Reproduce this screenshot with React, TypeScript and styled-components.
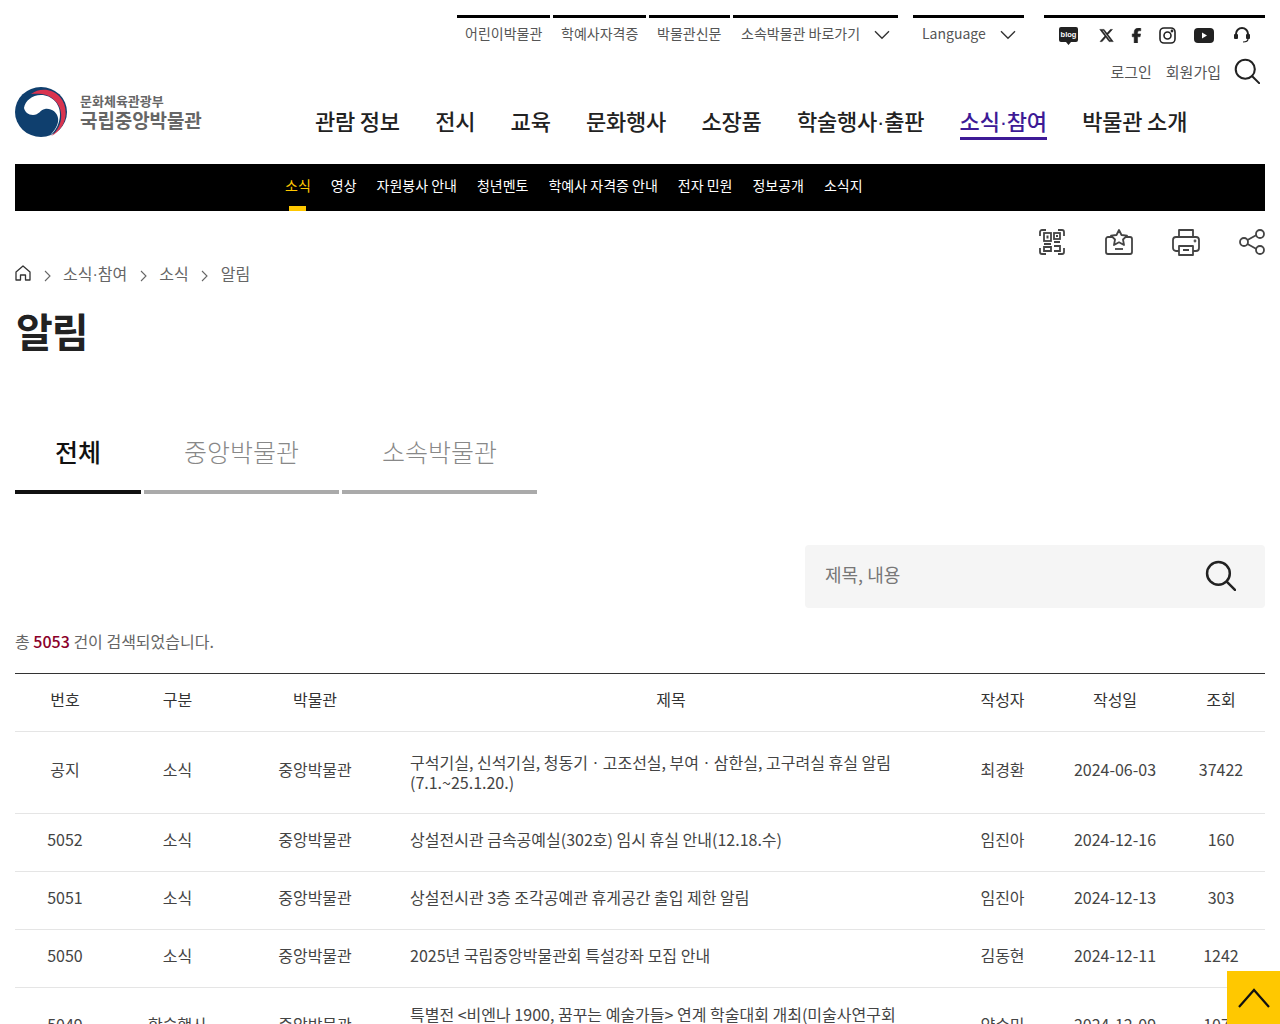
import React from 'react'
import styled, { createGlobalStyle } from 'styled-components'
import { FaFacebookF, FaXTwitter } from 'react-icons/fa6'

const GlobalStyle = createGlobalStyle`
    html, body {
        margin: 0;
        padding: 0;
        background: #fff;
        color: #333;
        font-family: "Noto Sans CJK KR", "Noto Sans", sans-serif;
    }
    * {
        box-sizing: border-box;
    }
`

const Page = styled.div`
    height: 100vh;
    overflow: hidden;
    padding: 15px 15px 0;
    position: relative;
`

const UtilRow = styled.div`
    display: flex;
    height: 40px;
    justify-content: flex-end;
`

const UtilGroup = styled.div`
    display: flex;
    gap: 3px;
`

const UtilItem = styled.a<{ $w: number; $ml?: number; $pl?: number }>`
    align-items: center;
    border-top: 3px solid #000;
    color: #555;
    display: flex;
    font-size: 14px;
    height: 40px;
    justify-content: space-between;
    margin-left: ${({ $ml }) => $ml || 0}px;
    padding: 0 8px 7px ${({ $pl }) => $pl || 8}px;
    white-space: nowrap;
    width: ${({ $w }) => $w}px;
    svg {
        margin-top: 4px;
    }
`

const SocialBar = styled.div`
    align-items: center;
    border-top: 3px solid #000;
    display: flex;
    height: 40px;
    margin-left: 20px;
    padding-bottom: 2px;
    position: relative;
    width: 221px;
    svg {
        color: #222;
        position: absolute;
    }
`

const LoginRow = styled.div`
    align-items: center;
    display: flex;
    height: 32px;
    justify-content: flex-end;
    padding-right: 5px;
    a {
        color: #555;
        font-size: 15px;
        margin-right: 14px;
    }
    a:last-of-type {
        margin-right: 13px;
    }
`

const NavRow = styled.div`
    display: flex;
    height: 77px;
`

const Logo = styled.a`
    align-items: flex-start;
    display: flex;
    gap: 13px;
    width: 300px;
`

const LogoText = styled.div`
    color: #666;
    display: flex;
    flex-direction: column;
    padding-top: 5px;
    small {
        font-size: 13px;
        font-weight: 700;
        letter-spacing: 0;
        line-height: 17px;
    }
    strong {
        font-size: 19px;
        font-weight: 700;
        letter-spacing: -0.1px;
        line-height: 22px;
    }
`

const MainNav = styled.nav`
    display: flex;
    gap: 35.3px;
    height: 53px;
`

const MainLink = styled.a<{ $active?: boolean }>`
    border-bottom: 3px solid ${({ $active }) => ($active ? '#3d1a96' : 'transparent')};
    color: ${({ $active }) => ($active ? '#3d1a96' : '#222')};
    font-size: 22px;
    font-weight: 500;
    height: 53px;
    letter-spacing: -0.2px;
    line-height: 30px;
    padding-top: 18px;
    white-space: nowrap;
`

// the middle dot is narrower than the CJK face's own
const Dot = styled.span`
    font-family: "Liberation Sans", sans-serif;
`

const SubNav = styled.nav`
    align-items: center;
    background: #000;
    display: flex;
    gap: 20px;
    height: 47px;
    padding-left: 270px;
`

const SubLink = styled.a<{ $active?: boolean }>`
    color: ${({ $active }) => ($active ? '#ffc800' : '#fff')};
    font-size: 14px;
    height: 47px;
    line-height: 43px;
    position: relative;
    white-space: nowrap;
    ${({ $active }) => $active && `
        &:after {
            background: #ffc800;
            bottom: 0;
            content: '';
            height: 5px;
            left: 4px;
            position: absolute;
            width: 17px;
        }
    `}
`

const ActionRow = styled.div`
    display: flex;
    gap: 39px;
    height: 34px;
    justify-content: flex-end;
    padding-top: 17px;
    svg {
        flex: none;
    }
`

const Breadcrumb = styled.div`
    align-items: center;
    color: #666;
    display: flex;
    font-size: 16px;
    gap: 12.5px;
    height: 26px;
    margin-top: 15px;
    svg {
        flex: none;
    }
`

const PageTitle = styled.h1`
    color: #222;
    font-size: 40px;
    font-weight: 700;
    letter-spacing: -1px;
    line-height: 58px;
    margin: 15px 0 0 1px;
`

const Tabs = styled.div`
    display: flex;
    gap: 3px;
    margin-top: 64px;
`

const Tab = styled.a<{ $w: number; $active?: boolean }>`
    border-bottom: 4px solid ${({ $active }) => ($active ? '#111' : '#aaa')};
    color: ${({ $active }) => ($active ? '#111' : '#888')};
    font-size: 25px;
    font-weight: ${({ $active }) => ($active ? 500 : 300)};
    height: 71px;
    line-height: 50px;
    padding-top: 3px;
    text-align: center;
    width: ${({ $w }) => $w}px;
`

const SearchRow = styled.div`
    display: flex;
    justify-content: flex-end;
    margin-top: 51px;
`

const SearchBox = styled.div`
    align-items: center;
    background: #f5f5f5;
    border-radius: 4px;
    display: flex;
    height: 63px;
    justify-content: space-between;
    padding: 0 29px 0 18px;
    width: 460px;
    input {
        background: transparent;
        border: 0;
        color: #333;
        flex: 1;
        font-family: inherit;
        font-size: 18px;
        margin-bottom: 6px;
        outline: 0;
    }
    input::placeholder {
        color: #777;
        opacity: 1;
    }
    svg {
        margin-bottom: 3px;
    }
`

const Total = styled.p`
    color: #666;
    font-size: 16px;
    line-height: 24px;
    margin: 21px 0 0;
    b {
        color: #8b0029;
        font-weight: 500;
    }
`

const Table = styled.table`
    border-collapse: collapse;
    border-top: 1px solid #333;
    color: #444;
    font-size: 16px;
    margin-top: 20px;
    table-layout: fixed;
    width: 1250px;
    th, td {
        border-bottom: 1px solid #e5e5e5;
        font-weight: 400;
        line-height: 20px;
        padding: 0 0 8px;
        text-align: center;
    }
    th {
        color: #333;
        height: 58px;
        padding-bottom: 7px;
    }
`

const Row = styled.tr<{ $h: number }>`
    height: ${({ $h }) => $h}px;
`

const TitleCell = styled.td<{ $lift: number }>`
    && {
        padding: 0 40px ${({ $lift }) => $lift}px 20px;
        text-align: left;
        word-break: keep-all;
    }
`

const TopButton = styled.a`
    align-items: center;
    background: #ffc800;
    bottom: 0;
    display: flex;
    height: 53px;
    justify-content: center;
    position: fixed;
    right: 0;
    width: 53px;
`

const Chevron = ({ w = 16 }: { w?: number }) => (
    <svg width={w} height={w * 0.6} viewBox="0 0 16 9" fill="none" stroke="#333" strokeWidth="1.4">
        <path d="M1 1l7 7 7-7" />
    </svg>
)

const SearchIcon = ({ size }: { size: number }) => (
    <svg width={size} height={size} viewBox="0 0 30 30" fill="none" stroke="#222" strokeWidth="2.4">
        <circle cx="13" cy="13" r="11" />
        <path d="M21 21l8 8" strokeLinecap="round" />
    </svg>
)

const Crumb = () => (
    <svg width="7" height="12" viewBox="0 0 7 12" fill="none" stroke="#666" strokeWidth="1.1" style={{ marginTop: 5 }}>
        <path d="M1 1l5 5-5 5" />
    </svg>
)

const Taegeuk = () => (
    <svg width="52" height="50" viewBox="0 0 52 50">
        <ellipse cx="26" cy="25" rx="26" ry="25" fill="#0f3f6e" />
        <path d="M9 21C10 14 17 8 26 8c11 0 19 9 19 19 0 9-4 17-10 21.500C41 42 44 36 43 31c-1-6-7-10-13-9-5 1-6 6-12 6-5 0-8-3-9-7z" fill="#fff" />
        <path d="M16 7C24 1 37 1 45 10c8 9 8 26-3 35-2 2-4 3-6 4 8-6 11-15 10-23C45 16 36 8 27 7c-4-.500-8-.500-11 0z" fill="#d9344f" />
    </svg>
)

const Social = () => (
    <SocialBar>
        <svg style={{ left: 14 }} width="21" height="20" viewBox="0 0 21 20">
            <path d="M3 1h15a2 2 0 0 1 2 2v11a2 2 0 0 1-2 2h-5l-2.500 3-2.500-3H3a2 2 0 0 1-2-2V3a2 2 0 0 1 2-2z" fill="#222" />
            <text x="10.500" y="11" fontSize="7.500" fontWeight="700" fill="#fff" textAnchor="middle" fontFamily="Liberation Sans, sans-serif">blog</text>
        </svg>
        <FaXTwitter style={{ left: 55, stroke: '#222', strokeWidth: 18 }} size={15} />
        <FaFacebookF style={{ left: 85, stroke: '#222', strokeWidth: 18 }} size={15} />
        <svg style={{ left: 115 }} width="17" height="17" viewBox="0 0 17 17" fill="none" stroke="#222" strokeWidth="1.600">
            <rect x="1" y="1" width="15" height="15" rx="4" />
            <circle cx="8.500" cy="8.500" r="3.500" />
            <circle cx="13" cy="4" r="0.600" fill="#222" />
        </svg>
        <svg style={{ left: 150 }} width="20" height="15" viewBox="0 0 20 15">
            <rect width="20" height="15" rx="4" fill="#222" />
            <path d="M8 4.500l5 3-5 3z" fill="#fff" />
        </svg>
        <svg style={{ left: 189 }} width="18" height="17" viewBox="0 0 18 17" fill="none" stroke="#222">
            <path d="M3 8V7a6 6 0 0 1 12 0v1" strokeWidth="2" />
            <rect x="1" y="7" width="4" height="5" rx="1" fill="#222" strokeWidth="0" />
            <rect x="13" y="7" width="4" height="5" rx="1" fill="#222" strokeWidth="0" />
            <path d="M15 12c0 2-2 3-5 3" strokeWidth="1.200" />
        </svg>
    </SocialBar>
)

const rows = [
    { no: '공지', cat: '소식', title: '구석기실, 신석기실, 청동기ㆍ고조선실, 부여ㆍ삼한실, 고구려실 휴실 알림 (7.1.~25.1.20.)', by: '최경환', date: '2024-06-03', view: '37422', h: 82, lift: 2 },
    { no: '5052', cat: '소식', title: '상설전시관 금속공예실(302호) 임시 휴실 안내(12.18.수)', by: '임진아', date: '2024-12-16', view: '160', h: 58, lift: 8 },
    { no: '5051', cat: '소식', title: '상설전시관 3층 조각공예관 휴게공간 출입 제한 알림', by: '임진아', date: '2024-12-13', view: '303', h: 58, lift: 8 },
    { no: '5050', cat: '소식', title: '2025년 국립중앙박물관회 특설강좌 모집 안내', by: '김동현', date: '2024-12-11', view: '1242', h: 58, lift: 8 },
    { no: '5049', cat: '학술행사', title: '특별전 <비엔나 1900, 꿈꾸는 예술가들> 연계 학술대회 개최(미술사연구회 공동주최)', by: '양수미', date: '2024-12-09', view: '1077', h: 80, lift: 8 },
]

const App: React.FC = () => {
    return (
        <Page>
            <GlobalStyle />
            <UtilRow>
                <UtilGroup>
                    <UtilItem $w={93}>어린이박물관</UtilItem>
                    <UtilItem $w={93}>학예사자격증</UtilItem>
                    <UtilItem $w={81}>박물관신문</UtilItem>
                    <UtilItem $w={165}>소속박물관 바로가기 <Chevron /></UtilItem>
                </UtilGroup>
                <UtilItem $w={111} $ml={15} $pl={9}>Language <Chevron /></UtilItem>
                <Social />
            </UtilRow>
            <LoginRow>
                <a>로그인</a>
                <a>회원가입</a>
                <SearchIcon size={26} />
            </LoginRow>
            <NavRow>
                <Logo>
                    <Taegeuk />
                    <LogoText>
                        <small>문화체육관광부</small>
                        <strong>국립중앙박물관</strong>
                    </LogoText>
                </Logo>
                <MainNav>
                    <MainLink>관람 정보</MainLink>
                    <MainLink>전시</MainLink>
                    <MainLink>교육</MainLink>
                    <MainLink>문화행사</MainLink>
                    <MainLink>소장품</MainLink>
                    <MainLink>학술행사<Dot>·</Dot>출판</MainLink>
                    <MainLink $active>소식<Dot>·</Dot>참여</MainLink>
                    <MainLink>박물관 소개</MainLink>
                </MainNav>
            </NavRow>
            <SubNav>
                <SubLink $active>소식</SubLink>
                <SubLink>영상</SubLink>
                <SubLink>자원봉사 안내</SubLink>
                <SubLink>청년멘토</SubLink>
                <SubLink>학예사 자격증 안내</SubLink>
                <SubLink>전자 민원</SubLink>
                <SubLink>정보공개</SubLink>
                <SubLink>소식지</SubLink>
            </SubNav>
            <ActionRow>
                <svg width="28" height="28" viewBox="0 0 28 28" fill="none" stroke="#444" strokeWidth="1.800">
                    <path d="M2 8V4a2 2 0 0 1 2-2h4M20 2h4a2 2 0 0 1 2 2v4M2 20v4a2 2 0 0 0 2 2h4M20 26h4a2 2 0 0 0 2-2v-4" />
                    <rect x="6" y="5" width="7" height="8" />
                    <rect x="8.500" y="7.500" width="2" height="3" fill="#444" strokeWidth="0" />
                    <rect x="16" y="5" width="6" height="6" />
                    <rect x="18" y="7" width="2" height="2" fill="#444" strokeWidth="0" />
                    <path d="M6 16h7M6 19h7v4H6zM16 14h6M16 18h6v5h-6" />
                </svg>
                <svg width="28" height="28" viewBox="0 0 28 28" fill="none" stroke="#444" strokeWidth="1.800" strokeLinejoin="round">
                    <path d="M8 9H3a2 2 0 0 0-2 2v13a2 2 0 0 0 2 2h22a2 2 0 0 0 2-2V11a2 2 0 0 0-2-2h-5" />
                    <path d="M14 2l2.500 5 5.500.700-4 3.800 1 5.500-5-2.700-5 2.700 1-5.500-4-3.800 5.500-.700z" />
                    <path d="M10 21h8" />
                </svg>
                <svg width="28" height="28" viewBox="0 0 28 28" fill="none" stroke="#444" strokeWidth="1.800" strokeLinejoin="round">
                    <path d="M7 9V2h14v7" />
                    <path d="M7 23H4a3 3 0 0 1-3-3v-8a3 3 0 0 1 3-3h20a3 3 0 0 1 3 3v8a3 3 0 0 1-3 3h-3" />
                    <path d="M7 18h14v9H7zM11 22h6" />
                    <circle cx="23" cy="13" r="0.500" />
                </svg>
                <svg width="26" height="28" viewBox="0 0 26 28" fill="none" stroke="#444" strokeWidth="1.800">
                    <circle cx="5" cy="14" r="4" />
                    <circle cx="21" cy="6" r="4" />
                    <circle cx="21" cy="22" r="4" />
                    <path d="M8.500 12l9-5M8.500 16l9 5" />
                </svg>
            </ActionRow>
            <Breadcrumb>
                <svg width="16" height="16" viewBox="0 0 16 16" fill="none" stroke="#333" strokeWidth="1.300" strokeLinejoin="round">
                    <path d="M1 7l7-6 7 6v8h-4.500v-5h-5v5H1z" />
                </svg>
                <Crumb />
                <span>소식<Dot>·</Dot>참여</span>
                <Crumb />
                <span>소식</span>
                <Crumb />
                <span>알림</span>
            </Breadcrumb>
            <PageTitle>알림</PageTitle>
            <Tabs>
                <Tab $w={126} $active>전체</Tab>
                <Tab $w={195}>중앙박물관</Tab>
                <Tab $w={195}>소속박물관</Tab>
            </Tabs>
            <SearchRow>
                <SearchBox>
                    <input placeholder="제목, 내용" />
                    <SearchIcon size={31} />
                </SearchBox>
            </SearchRow>
            <Total>총 <b>5053</b> 건이 검색되었습니다.</Total>
            <Table>
                <colgroup>
                    <col width="100" />
                    <col width="125" />
                    <col width="150" />
                    <col width="562" />
                    <col width="101" />
                    <col width="124" />
                    <col width="88" />
                </colgroup>
                <thead>
                    <tr>
                        <th>번호</th>
                        <th>구분</th>
                        <th>박물관</th>
                        <th>제목</th>
                        <th>작성자</th>
                        <th>작성일</th>
                        <th>조회</th>
                    </tr>
                </thead>
                <tbody>
                    {rows.map((row) => (
                        <Row key={row.no} $h={row.h}>
                            <td>{row.no}</td>
                            <td>{row.cat}</td>
                            <td>중앙박물관</td>
                            <TitleCell $lift={row.lift}>{row.title}</TitleCell>
                            <td>{row.by}</td>
                            <td>{row.date}</td>
                            <td>{row.view}</td>
                        </Row>
                    ))}
                </tbody>
            </Table>
            <TopButton>
                <svg width="32" height="20" viewBox="0 0 32 20" fill="none" stroke="#111" strokeWidth="2.200">
                    <path d="M1 19L16 2l15 17" />
                </svg>
            </TopButton>
        </Page>
    )
}

export default App
